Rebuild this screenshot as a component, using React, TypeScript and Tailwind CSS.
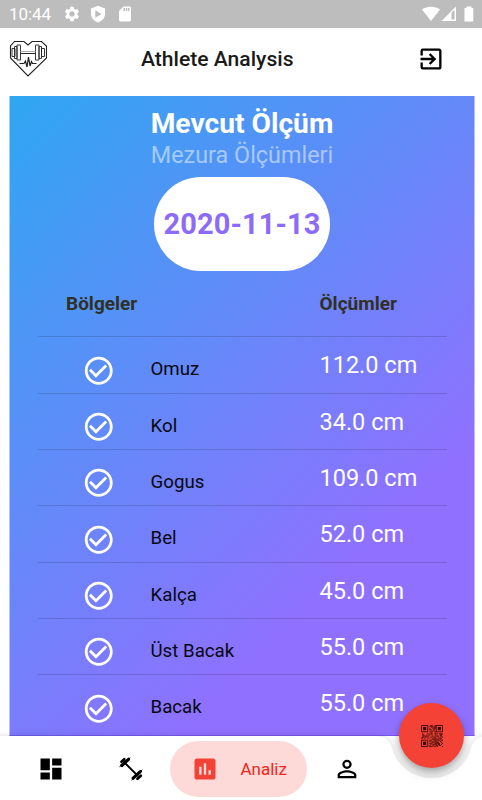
import React from "react";
import {
  MdCheckCircleOutline,
  MdDashboard,
  MdExitToApp,
  MdInsertChart,
  MdPersonOutline,
  MdSdCard,
  MdSettings,
} from "react-icons/md";

interface Measurement {
  region: string;
  value: string;
}

const measurements: Measurement[] = [
  { region: "Omuz", value: "112.0 cm" },
  { region: "Kol", value: "34.0 cm" },
  { region: "Gogus", value: "109.0 cm" },
  { region: "Bel", value: "52.0 cm" },
  { region: "Kalça", value: "45.0 cm" },
  { region: "Üst Bacak", value: "55.0 cm" },
  { region: "Bacak", value: "55.0 cm" },
];

// modules between the three finder squares
const qrRows = [
  "000000000110011000000",
  "000000001111010000000",
  "000000000010110000000",
  "000000001001110000000",
  "000000001100100000000",
  "000000000101100000000",
  "000000001010010000000",
  "000000000110010000000",
  "010000110110011101111",
  "011001001010010000110",
  "001110110001001110110",
  "011011000110110010001",
  "110100110001011001110",
  "000000000011110110100",
  "000000001100111011011",
  "000000001101011100100",
  "000000000011101110010",
  "000000001110011111001",
  "000000000101111011010",
  "000000001001001101100",
  "000000001110110100001",
];

const StatusBar: React.FC = () => (
  <div className="flex h-7 shrink-0 items-center bg-[#bdbdbd] text-white">
    <span className="ml-[9px] w-[42px] text-[17px] leading-7 tracking-[-0.1px]">10:44</span>
    <MdSettings className="ml-[12px]" size={18} />
    <svg className="ml-[9px]" width="16" height="18" viewBox="0 0 16 18">
      <path d="M8 .8 15 3.400V9c0 4-3 7-7 8.400C4 16 1 13 1 9V3.400z" fill="currentColor" />
      <path d="M5.300 5.300v7.400L11.500 9z" fill="#bdbdbd" />
    </svg>
    <MdSdCard className="ml-[10px]" size={18} />
    <svg className="ml-auto mr-[8px]" width="52" height="18" viewBox="0 0 52 18">
      <path d="M0 4.500C5 .8 13 .8 18 4.500L9 16z" fill="currentColor" />
      <path d="M34 1.500V16H19.500z" fill="currentColor" />
      <path d="M29.500 7.500 32.500 5v9.500h-3z" fill="#bdbdbd" />
      <path d="M42.500 3h2V1.500h5V3h1.800v13.500h-8.800z" fill="currentColor" />
    </svg>
  </div>
);

const HeartLogo: React.FC = () => (
  <svg width="38" height="38" viewBox="0 0 38 38" fill="none" stroke="#222" strokeWidth="1.100">
    <path d="M5.500 1.500h9.500l4 3.500 4-3.500h9.500l5 4.500v12L19 36 1.500 18V6z" />
    <path d="M3 8.500h3v8H3zM5.500 6.500h2.500v12H5.500zM8 5h3.500v15H8zM26.500 5H30v15h-3.500zM30 6.500h2.500v12H30zM32.500 8.500h3v8h-3z" strokeWidth="0.900" />
    <path d="M11.500 11.500h15" stroke="#aaa" strokeWidth="1" />
    <path d="M11.500 13.500h15" strokeWidth="1" />
    <path d="M10.500 23.500h4.500l1.500-2.500 1.500 6 1.500-10 1.500 9 1.500-4.500 1 2h4" strokeWidth="1.200" />
  </svg>
);

const DumbbellIcon: React.FC = () => (
  <svg className="ml-[53px]" width="26" height="26" viewBox="0 0 26 26" fill="none" stroke="currentColor" strokeLinecap="round">
    <path d="M6 6 19.500 19.500" strokeWidth="1.800" />
    <path d="M3.800 9.500 10.500 3.300M15.200 22.200 22.300 15.600" strokeWidth="3.200" />
    <path d="M3.500 5.800 6.300 3.200M19.500 22.800 22.800 19.700" strokeWidth="2.600" />
    <path d="M1.800 10.500 12 1.900M13.800 23.800 24 14.300" strokeWidth="1" />
  </svg>
);

const QrCode: React.FC = () => (
  <svg width="22" height="22" viewBox="0 0 21 21" fill="#3a0d0a">
    <g fill="none" stroke="#3a0d0a" strokeWidth="0.900">
      <path d="M.5.5h6v6h-6zM14.500.5h6v6h-6zM.5 14.500h6v6h-6z" />
    </g>
    <path d="M2 2h3v3H2zM16 2h3v3h-3zM2 16h3v3H2z" />
    {qrRows.map((row, y) =>
      row.split("").map((cell, x) =>
        cell === "1" ? <rect key={`${x}-${y}`} x={x} y={y} width="1" height="1" /> : null
      )
    )}
  </svg>
);

const MeasurementCard: React.FC = () => (
  <main className="ml-[9px] mr-[7px] mt-[7px] flex h-[640px] shrink-0 flex-col items-center overflow-hidden border-x border-b border-x-white/50 border-b-[#4a20d8]/30 bg-[linear-gradient(135deg,#2fa7f2_0px,#9070ff_580px)] bg-origin-border">
    <h1 className="mt-[11px] whitespace-nowrap text-[28.200px] font-bold leading-[33px] text-white">
      Mevcut Ölçüm
    </h1>
    <h2 className="mt-px whitespace-nowrap text-[23.400px] leading-[28px] text-white/50">Mezura Ölçümleri</h2>
    <div className="mt-[8px] flex h-[94px] w-[176px] shrink-0 items-center justify-center rounded-full bg-white">
      <span className="whitespace-nowrap pt-px text-[29px] font-bold tracking-[0.1px] text-[#8c6bf8]">2020-11-13</span>
    </div>

    <div className="w-[409px]">
      <div className="flex h-[65.400px] items-center pt-px text-[19px] font-bold text-[#303023]">
        <span className="w-[282px] pl-[28.500px]">Bölgeler</span>
        <span>Ölçümler</span>
      </div>
      {measurements.map((item) => (
        <div key={item.region} className="flex h-[56.300px] border-t border-black/15">
          <div className="w-[113px] pl-[44px] pt-[16.500px]">
            <MdCheckCircleOutline className="text-white" size={33.5} />
          </div>
          <span className="w-[169px] pt-[18px] text-[18.700px] leading-[28px] text-[#08080e]">{item.region}</span>
          <span className="whitespace-nowrap pt-[14px] text-[23.500px] leading-[28px] text-white">{item.value}</span>
        </div>
      ))}
    </div>
  </main>
);

const BottomNav: React.FC = () => (
  <nav className="relative flex h-16 shrink-0 items-center">
    <svg
      className="absolute left-0 top-0 overflow-visible drop-shadow-[0_0_3px_rgba(0,0,0,0.15)]"
      width="482"
      height="64"
      viewBox="0 0 482 64"
    >
      <path d="M-10 0H374C385 0 389 4 391.500 10A41 41 0 0 0 471.500 10C474 4 478 0 490 0V74H-10Z" fill="white" />
    </svg>
    <div className="relative flex items-center pt-[2px] text-black">
      <MdDashboard className="ml-[37px]" size={28} />
      <DumbbellIcon />
      <div className="ml-[26px] flex h-14 w-[137px] items-center rounded-full bg-[#fdd9d7] text-[#f44336]">
        <MdInsertChart className="ml-[21px]" size={28} />
        <span className="ml-[21.500px] pt-px text-[17px] text-[#f3251b]">Analiz</span>
      </div>
      <MdPersonOutline className="ml-[26px]" size={28} />
    </div>
    {/* Floating QR button */}
    <button className="absolute left-[399px] top-[-33px] flex h-[65px] w-[65px] items-center justify-center rounded-full bg-[#f44336] shadow-[0_5px_9px_0_rgba(0,0,0,0.36)]">
      <QrCode />
    </button>
  </nav>
);

const App: React.FC = () => {
  return (
    <div className="flex h-[800px] w-[482px] flex-col overflow-hidden bg-white font-[Roboto,sans-serif]">
      <StatusBar />
      <header className="flex h-[61px] shrink-0 items-center">
        <div className="ml-[9px] w-[132px]">
          <HeartLogo />
        </div>
        <span className="whitespace-nowrap pt-px text-[21.100px] font-medium text-[#1a1a1a]">Athlete Analysis</span>
        <MdExitToApp className="ml-auto mr-[37px] text-black" size={28} />
      </header>
      <MeasurementCard />
      <BottomNav />
    </div>
  );
};

export default App;
